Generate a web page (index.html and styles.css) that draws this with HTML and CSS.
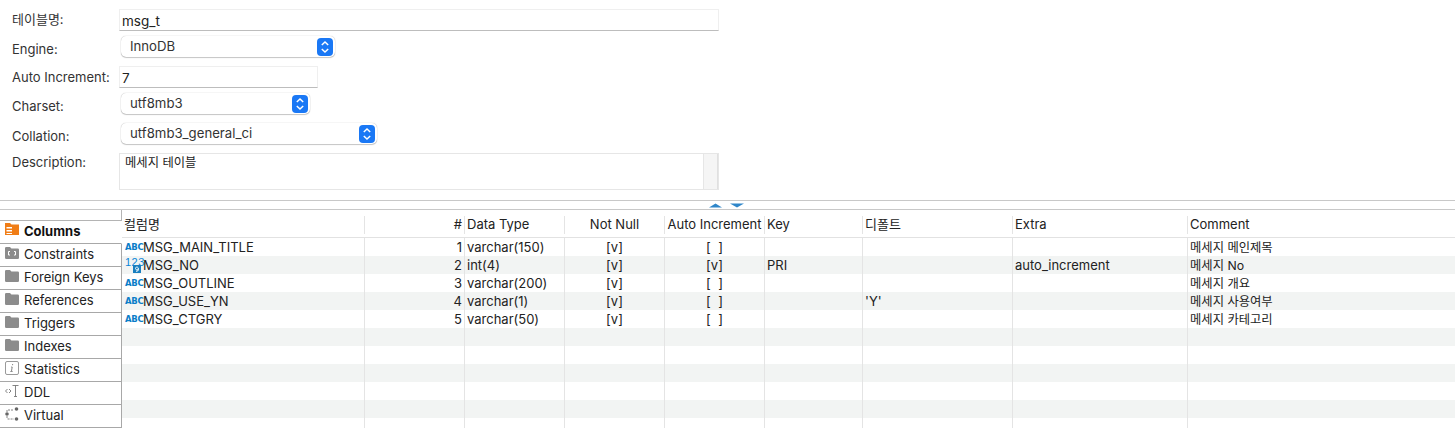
FILE: index.html
```html
<!DOCTYPE html>
<html lang="ko">
<head>
<meta charset="utf-8">
<title>msg_t</title>
<link rel="stylesheet" href="styles.css">
</head>
<body>
<svg class="defs" width="0" height="0" aria-hidden="true">
  <symbol id="folder" viewBox="0 0 14 12"><path d="M0 1.2Q0 0 1.2 0H5L6.4 1.6H12.8Q14 1.6 14 2.8V10.8Q14 12 12.8 12H1.2Q0 12 0 10.8Z" fill="#8c8c8c"/></symbol>
  <symbol id="stepper" viewBox="0 0 16 18"><rect width="16" height="18" rx="4" fill="#1a78f5"/><path d="M4.8 7 8 4 11.2 7M4.8 11 8 14 11.2 11" fill="none" stroke="#fff" stroke-width="1.5"/></symbol>
</svg>
<main class="app">
  <section class="form">
    <div class="row row-name"><label class="lbl">테이블명:</label><div class="input input-wide">msg_t</div></div>
    <div class="row row-engine"><label class="lbl">Engine:</label><div class="select sel-engine">InnoDB<svg class="step"><use href="#stepper"/></svg></div></div>
    <div class="row row-auto"><label class="lbl">Auto Increment:</label><div class="input input-auto">7</div></div>
    <div class="row row-charset"><label class="lbl">Charset:</label><div class="select sel-charset">utf8mb3<svg class="step"><use href="#stepper"/></svg></div></div>
    <div class="row row-coll"><label class="lbl">Collation:</label><div class="select sel-coll">utf8mb3_general_ci<svg class="step"><use href="#stepper"/></svg></div></div>
    <div class="row row-desc"><label class="lbl">Description:</label><div class="desc"><div class="desc-text">메세지 테이블</div><div class="desc-scroll"></div></div></div>
  </section>
  <div class="splitter">
    <svg width="40" height="5" viewBox="0 0 40 5"><path d="M0 4.5 6.500 .5 13 4.500ZM21 .5H35L28 4.500Z" fill="#2f86c9"/></svg>
  </div>
  <section class="lower">
    <nav class="tabs">
      <div class="tab-top"></div>
      <div class="tab tab-on"><svg class="ico" viewBox="0 0 14 12"><path d="M0 0H5L6.500 1.500H14V12H0Z" fill="#f07d16"/><path d="M1.500 4H7V5.500H1.500ZM1.500 7H7V8.500H1.500ZM1.500 10H7V11H1.500Z" fill="#fff"/></svg>Columns</div>
      <div class="tab"><svg class="ico" viewBox="0 0 14 12"><use href="#folder"/><path d="M5 4.500H3.500V8H5M9 4.500H10.500V8H9" fill="none" stroke="#fff" stroke-width="1"/></svg>Constraints</div>
      <div class="tab"><svg class="ico"><use href="#folder"/></svg>Foreign Keys</div>
      <div class="tab"><svg class="ico"><use href="#folder"/></svg>References</div>
      <div class="tab"><svg class="ico"><use href="#folder"/></svg>Triggers</div>
      <div class="tab"><svg class="ico"><use href="#folder"/></svg>Indexes</div>
      <div class="tab"><svg class="ico ico-tall" viewBox="0 0 14 14"><rect x=".5" y=".5" width="13" height="13" rx="1.500" fill="#fff" stroke="#9a9a9a"/><path d="M7.600 3V4.200M7.200 6H6.200M7.200 6 6.400 10.500H5.400M6.400 10.500H7.600" fill="none" stroke="#777" stroke-width=".9"/></svg>Statistics</div>
      <div class="tab"><svg class="ico ico-tall" viewBox="0 0 14 14"><path d="M2.500 5 .5 7 2.500 9M4 5 6 7 4 9" fill="none" stroke="#777" stroke-width=".9"/><path d="M7.500 1.500H13.500M10.500 1.500V12.500M9 12.500H12" fill="none" stroke="#777" stroke-width=".9"/></svg>DDL</div>
      <div class="tab"><svg class="ico ico-tall" viewBox="0 0 14 14"><circle cx="11.500" cy="2" r="1.800" fill="#666"/><circle cx="2" cy="7" r="1.800" fill="#666"/><circle cx="11.500" cy="12" r="1.800" fill="#666"/><path d="M2 5V3H9M2 9V11Q2 12 3 12H9" fill="none" stroke="#666" stroke-width=".8" stroke-dasharray="2 1"/></svg>Virtual</div>
    </nav>
    <div class="grid">
      <div class="tr th">
        <div class="c">컬럼명</div><div class="c num">#</div><div class="c">Data Type</div><div class="c mid">Not Null</div><div class="c mid">Auto Increment</div><div class="c">Key</div><div class="c">디폴트</div><div class="c">Extra</div><div class="c">Comment</div>
      </div>
      <div class="tr">
        <div class="c name"><span class="abc">ABC</span>MSG_MAIN_TITLE</div><div class="c num">1</div><div class="c">varchar(150)</div><div class="c mid">[v]</div><div class="c mid">[ ]</div><div class="c"></div><div class="c"></div><div class="c"></div><div class="c cmt">메세지 메인제목</div>
      </div>
      <div class="tr alt">
        <div class="c name"><span class="n123">123<svg class="badge" viewBox="0 0 8 8"><rect width="8" height="8" fill="#1a7fc0"/><path d="M5.300 3.500A1.400 1.400 0 1 1 5.300 3.400V5Q5.300 6.300 3 6.300" fill="none" stroke="#fff"/></svg></span>MSG_NO</div><div class="c num">2</div><div class="c">int(4)</div><div class="c mid">[v]</div><div class="c mid">[v]</div><div class="c">PRI</div><div class="c"></div><div class="c">auto_increment</div><div class="c cmt">메세지 No</div>
      </div>
      <div class="tr">
        <div class="c name"><span class="abc">ABC</span>MSG_OUTLINE</div><div class="c num">3</div><div class="c">varchar(200)</div><div class="c mid">[v]</div><div class="c mid">[ ]</div><div class="c"></div><div class="c"></div><div class="c"></div><div class="c cmt">메세지 개요</div>
      </div>
      <div class="tr alt">
        <div class="c name"><span class="abc">ABC</span>MSG_USE_YN</div><div class="c num">4</div><div class="c">varchar(1)</div><div class="c mid">[v]</div><div class="c mid">[ ]</div><div class="c"></div><div class="c">'Y'</div><div class="c"></div><div class="c cmt">메세지 사용여부</div>
      </div>
      <div class="tr">
        <div class="c name"><span class="abc">ABC</span>MSG_CTGRY</div><div class="c num">5</div><div class="c">varchar(50)</div><div class="c mid">[v]</div><div class="c mid">[ ]</div><div class="c"></div><div class="c"></div><div class="c"></div><div class="c cmt">메세지 카테고리</div>
      </div>
      <div class="tr alt"><div class="c"></div><div class="c"></div><div class="c"></div><div class="c"></div><div class="c"></div><div class="c"></div><div class="c"></div><div class="c"></div><div class="c"></div></div>
      <div class="tr"><div class="c"></div><div class="c"></div><div class="c"></div><div class="c"></div><div class="c"></div><div class="c"></div><div class="c"></div><div class="c"></div><div class="c"></div></div>
      <div class="tr alt"><div class="c"></div><div class="c"></div><div class="c"></div><div class="c"></div><div class="c"></div><div class="c"></div><div class="c"></div><div class="c"></div><div class="c"></div></div>
      <div class="tr"><div class="c"></div><div class="c"></div><div class="c"></div><div class="c"></div><div class="c"></div><div class="c"></div><div class="c"></div><div class="c"></div><div class="c"></div></div>
      <div class="tr alt"><div class="c"></div><div class="c"></div><div class="c"></div><div class="c"></div><div class="c"></div><div class="c"></div><div class="c"></div><div class="c"></div><div class="c"></div></div>
      <div class="tr"><div class="c"></div><div class="c"></div><div class="c"></div><div class="c"></div><div class="c"></div><div class="c"></div><div class="c"></div><div class="c"></div><div class="c"></div></div>
    </div>
  </section>
</main>
</body>
</html>
```
FILE: styles.css
```css
* { box-sizing: border-box; }
html, body { margin: 0; height: 100%; background: #fff; overflow: hidden; }
body { font: 13px/16px Inter, "Noto Sans CJK KR", sans-serif; color: #222; }
.defs { position: absolute; }
.app { display: flex; flex-direction: column; width: 1455px; height: 428px; }

.form { height: 201px; border-bottom: 1px solid #c8c8c8; padding-top: 9px; display: flex; flex-direction: column; flex: none; }
.row { display: flex; flex: none; }
.lbl { width: 119px; padding-left: 12px; flex: none; color: #333; font-size: 13px; }
.row-name { height: 22px; }
.row-engine { height: 21px; margin-top: 5px; }
.row-auto { height: 22px; margin-top: 9px; }
.row-charset { height: 21px; margin-top: 5px; }
.row-coll { height: 21px; margin-top: 9px; }
.row-desc { height: 37px; margin-top: 9px; }
.row-name .lbl { line-height: 20px; }
.row-engine .lbl { padding-top: 5px; }
.row-auto .lbl { padding-top: 3px; }
.row-charset .lbl { padding-top: 5px; }
.row-coll .lbl { padding-top: 5px; }
.row-desc .lbl { padding-top: 1px; }

.input { border: 1px solid #efefef; border-bottom-color: #bdbdbd; padding: 3px 2px 0; color: #222; font-size: 13.500px; }
.input-wide { width: 600px; }
.input-auto { width: 199px; }
.select { margin-left: 2px; background: #fff; border-radius: 5px; box-shadow: 0 0 1px rgba(0,0,0,.35), 0 1px 1px rgba(0,0,0,.2); padding: 2px 2px 0 9px; display: flex; justify-content: space-between; color: #333; font-size: 13.200px; }
.sel-engine { width: 214px; }
.sel-charset { width: 189px; }
.sel-coll { width: 256px; }
.step { width: 16px; height: 18px; flex: none; margin-top: -.5px; }

.desc { width: 600px; border: 1px solid #e6e6e6; display: flex; }
.desc-text { flex: 1; padding: 1px 5px; font-size: 12.300px; color: #222; }
.desc-scroll { width: 15px; background: #f5f5f5; border-left: 1px solid #e6e6e6; border-right: 1px solid #e0e0e0; }

.splitter { height: 9px; border-bottom: 1px solid #c8c8c8; flex: none; display: flex; justify-content: center; padding: 1.500px 0 0 0; }
.splitter svg { display: block; margin-left: 2px; }

.lower { display: flex; flex: 1; min-height: 0; }
.tabs { width: 122px; flex: none; display: flex; flex-direction: column; }
.tab-top { height: 11px; border-right: 1px solid #b4b4b4; border-bottom: 1px solid #b4b4b4; flex: none; }
.tab { height: 23px; flex: none; border-right: 1px solid #a8a8a8; border-bottom: 1px solid #a8a8a8; padding: 0 0 2px 5px; display: flex; align-items: center; gap: 5px; color: #222; font-size: 13px; }
.tab-on { border-right-color: transparent; font-weight: 700; color: #111; }
.ico { width: 14px; height: 12px; flex: none; margin-top: -2px; }
.tab-on .ico { margin-top: -4px; }
.ico-tall { height: 14px; }

.grid { flex: 1; min-width: 0; display: flex; flex-direction: column; }
.tr { display: grid; grid-template-columns: 242px 100px 100px 100px 100px 98px 150px 175px 268px; height: 18px; flex: none; }
.th { height: 28px; border-bottom: 1px solid #e2e2e2; }
.alt { background: #f2f4f3; }
.c { border-left: 1px solid #e4e4e4; padding: 0 2px; font-size: 13px; line-height: 18px; white-space: nowrap; overflow: hidden; color: #222; }
.th .c { line-height: 29px; position: relative; border-left: 0; padding: 0 2px 0 3px; }
.th .c::before { content: ""; position: absolute; left: 0; top: 6px; bottom: 3px; width: 1px; background: #e4e4e4; }
.tr .c:first-child { border-left: 0; }
.th .c:first-child::before { display: none; }
.th .c:first-child { padding-left: 2px; }
.num { text-align: right; }
.mid { text-align: center; }
.tr:not(.th) .mid { word-spacing: 4px; }
.cmt { font-size: 12.300px; padding-top: 1px; }
.name { display: flex; align-items: center; gap: 1px; padding-left: 3px; }
.abc { width: 17px; flex: none; font: 700 8.500px/8px "DejaVu Sans", sans-serif; color: #0b7dc8; letter-spacing: -.3px; margin-top: 0; }
.n123 { width: 17px; height: 17px; flex: none; padding-top: 2px; font: 11px/11px "Liberation Sans", sans-serif; letter-spacing: .5px; color: #0b86d8; position: relative; margin-top: -3px; }
.badge { position: absolute; left: 8px; top: 10px; width: 8px; height: 8px; display: block; }
```
